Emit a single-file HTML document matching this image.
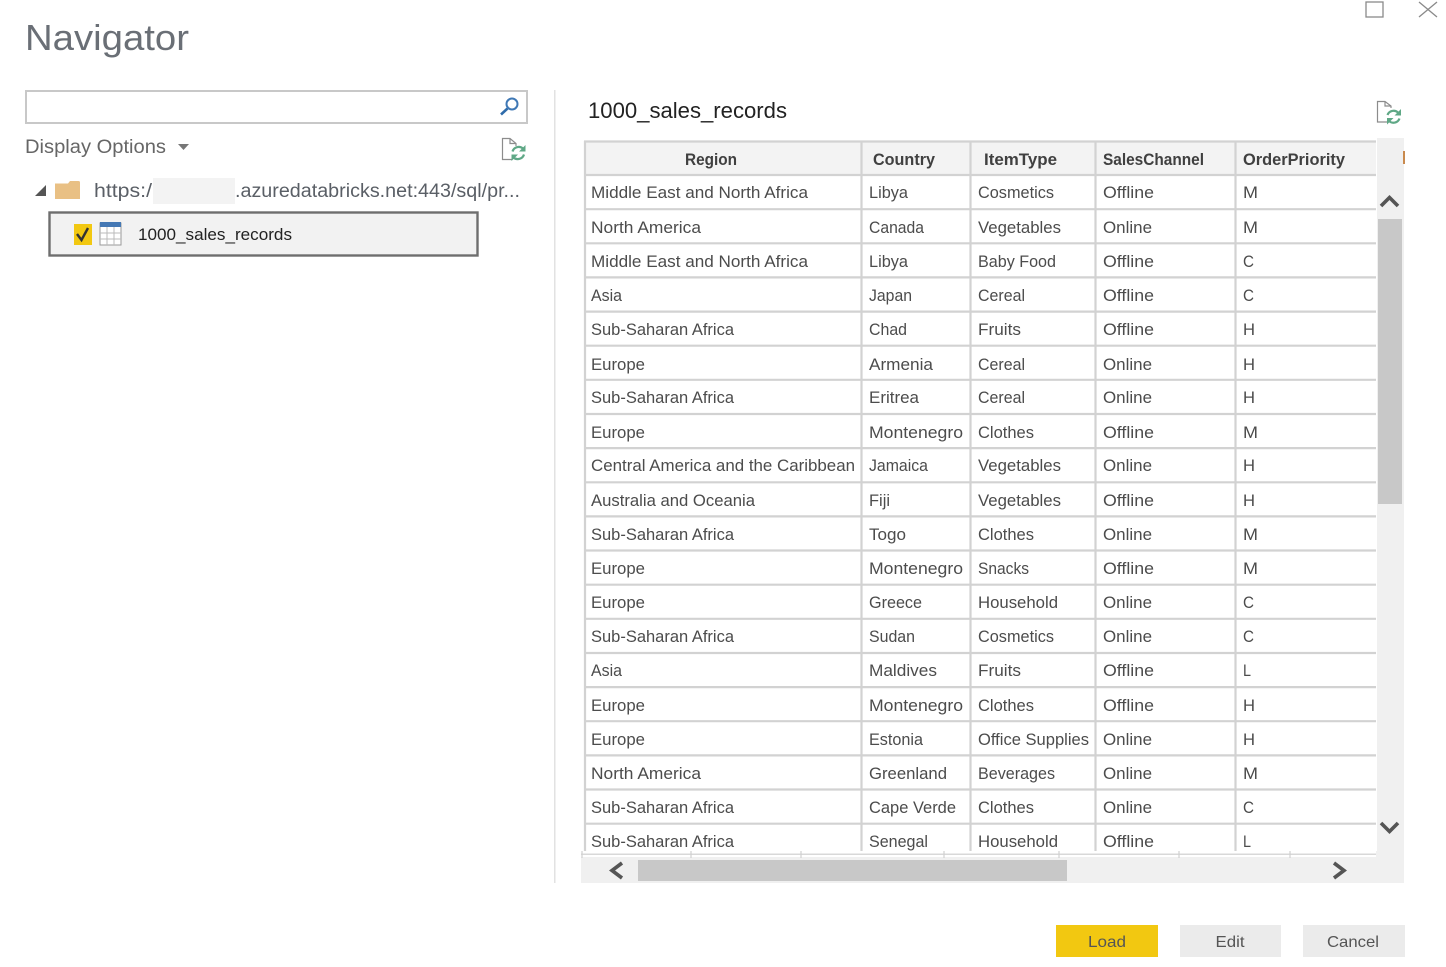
<!DOCTYPE html>
<html><head><meta charset="utf-8"><title>Navigator</title>
<style>
html,body{margin:0;padding:0;background:#fff;width:1446px;height:967px;overflow:hidden}
svg{display:block;font-family:"Liberation Sans",sans-serif;filter:blur(.35px)}
.t text{font-size:17px;fill:#4c4c4c}
.h text{font-size:17px;font-weight:bold;fill:#404040}
</style></head><body>
<svg width="1446" height="967" viewBox="0 0 1446 967" xmlns="http://www.w3.org/2000/svg">
<defs><clipPath id="c"><rect x="580" y="138" width="797" height="713"/></clipPath></defs>
<rect width="1446" height="967" fill="#fff"/>
<!-- window controls -->
<rect x="1366" y="2" width="17" height="15" fill="none" stroke="#8a8a8a" stroke-width="1.3"/>
<path d="M1419 2L1437 17M1437 2L1419 17" stroke="#8a8a8a" stroke-width="1.3" fill="none"/>
<!-- title -->
<text x="25" y="50" font-size="36" fill="#6a6f76" textLength="164" lengthAdjust="spacingAndGlyphs">Navigator</text>
<!-- search -->
<rect x="26" y="91" width="501" height="32" fill="#fff" stroke="#c8c8c8" stroke-width="2"/>
<circle cx="512" cy="104" r="5.500" fill="none" stroke="#3f78b5" stroke-width="2"/>
<path d="M507.500 108.500L501 114.500" stroke="#2f6cab" stroke-width="2.600"/>
<!-- display options -->
<text x="25" y="153" font-size="19" fill="#666" textLength="141" lengthAdjust="spacingAndGlyphs">Display Options</text>
<path d="M178 144H189L183.500 150Z" fill="#777"/>
<!-- refresh icon left -->
<path d="M516 146V143.500L510 138.500H502.500V159.500H512" fill="#fff" stroke="#8c8c8c" stroke-width="1.200"/>
<path d="M510 138.500V143.500H516" fill="none" stroke="#8c8c8c" stroke-width="1.200"/>
<path d="M512.500 151.500A6.500 6.500 0 0 1 523 148.500M524 154.500A6.500 6.500 0 0 1 513.500 157.500" fill="none" stroke="#5fa886" stroke-width="2.200"/>
<path d="M525.500 145V151.500H519Z M511.500 161V154.500H518Z" fill="#5fa886"/>
<!-- tree -->
<path d="M46 185V196H35Z" fill="#555"/>
<path d="M55 183.500H68L70 181H78.500a1.500 1.500 0 0 1 1.500 1.500V199H55Z" fill="#e9c084"/>
<text x="94" y="197" font-size="19" fill="#5a5f66" textLength="58" lengthAdjust="spacingAndGlyphs">https:/</text>
<rect x="153" y="178" width="82" height="26" fill="#f3f3f3"/>
<text x="235" y="197" font-size="19" fill="#5a5f66" textLength="285" lengthAdjust="spacingAndGlyphs">.azuredatabricks.net:443/sql/pr...</text>
<!-- selected -->
<rect x="49.500" y="212.500" width="428" height="43" fill="#f2f2f2" stroke="#6e6e6e" stroke-width="2.400"/>
<rect x="74" y="224" width="18" height="21" fill="#f2c811"/>
<path d="M77 234L81.500 240L88 228" fill="none" stroke="#333" stroke-width="2.400"/>
<rect x="100" y="223" width="21" height="22" fill="#fff" stroke="#999" stroke-width="1"/>
<rect x="100" y="222" width="21" height="5" fill="#4478b4"/>
<path d="M107 227V245M114 227V245M100 233H121M100 239H121" stroke="#bbb" stroke-width="1"/>
<text x="138" y="240" font-size="17" fill="#222" textLength="154" lengthAdjust="spacingAndGlyphs">1000_sales_records</text>
<!-- splitter -->
<rect x="554" y="90" width="1.500" height="793" fill="#e2e2e2"/>
<!-- heading -->
<text x="588" y="118" font-size="22" fill="#222" textLength="199" lengthAdjust="spacingAndGlyphs">1000_sales_records</text>
<!-- refresh icon right -->
<path d="M1391 108V106L1385 101.500H1377.500V122H1387" fill="#fff" stroke="#8c8c8c" stroke-width="1.200"/>
<path d="M1385 101.500V106H1391" fill="none" stroke="#8c8c8c" stroke-width="1.200"/>
<path d="M1387.500 115A6.500 6.500 0 0 1 1398 112.500M1399.500 118.500A6.500 6.500 0 0 1 1389 121" fill="none" stroke="#5fa886" stroke-width="2.200"/>
<path d="M1401 109V115.500H1394.500Z M1387 124.500V118H1393.500Z" fill="#5fa886"/>
<!-- scrollbars -->
<rect x="1377" y="138" width="27" height="745" fill="#f0f0f0"/>
<rect x="581" y="851" width="823" height="32" fill="#f0f0f0"/>
<rect x="1378" y="219" width="24" height="285" fill="#c8c8c8"/>
<rect x="638" y="860" width="429" height="21" fill="#c8c8c8"/>
<path d="M1381 206L1389.500 197.500L1398 206" fill="none" stroke="#555" stroke-width="3.600"/>
<path d="M1381 823L1389.500 831.500L1398 823" fill="none" stroke="#555" stroke-width="3.600"/>
<path d="M622 863L612 870.500L622 878" fill="none" stroke="#555" stroke-width="3.600"/>
<path d="M1334 863L1344 870.500L1334 878" fill="none" stroke="#555" stroke-width="3.600"/>
<rect x="1403" y="151" width="2" height="13" fill="#c98a4e"/>
<!-- table grid -->
<rect x="585" y="141" width="791" height="34" fill="#f3f3f3"/>
<g clip-path="url(#c)">
<g stroke="#d2d2d2" stroke-width="2.200" fill="none">
<path d="M584 141.500H1376M584 175H1376M584 209.200H1376M584 243.300H1376M584 277.400H1376M584 311.600H1376M584 345.700H1376M584 379.800H1376M584 414H1376M584 448.100H1376M584 482.300H1376M584 516.400H1376M584 550.500H1376M584 584.700H1376M584 618.800H1376M584 653H1376M584 687.100H1376M584 721.200H1376M584 755.400H1376M584 789.500H1376M584 823.700H1376"/>
<path d="M585 141V851M861.500 141V851M970.500 141V851M1095.500 141V851M1235.500 141V851"/>
</g>
<g class="h">
<text x="685" y="165" textLength="52" lengthAdjust="spacingAndGlyphs">Region</text>
<text x="873" y="165" textLength="62" lengthAdjust="spacingAndGlyphs">Country</text>
<text x="984" y="165" textLength="73" lengthAdjust="spacingAndGlyphs">ItemType</text>
<text x="1103" y="165" textLength="101" lengthAdjust="spacingAndGlyphs">SalesChannel</text>
<text x="1243" y="165" textLength="102" lengthAdjust="spacingAndGlyphs">OrderPriority</text>
</g>
<g class="t">
<text x="591" y="198" textLength="217" lengthAdjust="spacingAndGlyphs">Middle East and North Africa</text><text x="869" y="198" textLength="39" lengthAdjust="spacingAndGlyphs">Libya</text><text x="978" y="198" textLength="76" lengthAdjust="spacingAndGlyphs">Cosmetics</text><text x="1103" y="198" textLength="51" lengthAdjust="spacingAndGlyphs">Offline</text><text x="1243" y="198" textLength="15" lengthAdjust="spacingAndGlyphs">M</text>
<text x="591" y="233" textLength="110" lengthAdjust="spacingAndGlyphs">North America</text><text x="869" y="233" textLength="55" lengthAdjust="spacingAndGlyphs">Canada</text><text x="978" y="233" textLength="83" lengthAdjust="spacingAndGlyphs">Vegetables</text><text x="1103" y="233" textLength="49" lengthAdjust="spacingAndGlyphs">Online</text><text x="1243" y="233" textLength="15" lengthAdjust="spacingAndGlyphs">M</text>
<text x="591" y="267" textLength="217" lengthAdjust="spacingAndGlyphs">Middle East and North Africa</text><text x="869" y="267" textLength="39" lengthAdjust="spacingAndGlyphs">Libya</text><text x="978" y="267" textLength="78" lengthAdjust="spacingAndGlyphs">Baby Food</text><text x="1103" y="267" textLength="51" lengthAdjust="spacingAndGlyphs">Offline</text><text x="1243" y="267" textLength="11" lengthAdjust="spacingAndGlyphs">C</text>
<text x="591" y="301" textLength="31" lengthAdjust="spacingAndGlyphs">Asia</text><text x="869" y="301" textLength="43" lengthAdjust="spacingAndGlyphs">Japan</text><text x="978" y="301" textLength="47" lengthAdjust="spacingAndGlyphs">Cereal</text><text x="1103" y="301" textLength="51" lengthAdjust="spacingAndGlyphs">Offline</text><text x="1243" y="301" textLength="11" lengthAdjust="spacingAndGlyphs">C</text>
<text x="591" y="335" textLength="143" lengthAdjust="spacingAndGlyphs">Sub-Saharan Africa</text><text x="869" y="335" textLength="38" lengthAdjust="spacingAndGlyphs">Chad</text><text x="978" y="335" textLength="43" lengthAdjust="spacingAndGlyphs">Fruits</text><text x="1103" y="335" textLength="51" lengthAdjust="spacingAndGlyphs">Offline</text><text x="1243" y="335" textLength="12" lengthAdjust="spacingAndGlyphs">H</text>
<text x="591" y="370" textLength="54" lengthAdjust="spacingAndGlyphs">Europe</text><text x="869" y="370" textLength="64" lengthAdjust="spacingAndGlyphs">Armenia</text><text x="978" y="370" textLength="47" lengthAdjust="spacingAndGlyphs">Cereal</text><text x="1103" y="370" textLength="49" lengthAdjust="spacingAndGlyphs">Online</text><text x="1243" y="370" textLength="12" lengthAdjust="spacingAndGlyphs">H</text>
<text x="591" y="403" textLength="143" lengthAdjust="spacingAndGlyphs">Sub-Saharan Africa</text><text x="869" y="403" textLength="50" lengthAdjust="spacingAndGlyphs">Eritrea</text><text x="978" y="403" textLength="47" lengthAdjust="spacingAndGlyphs">Cereal</text><text x="1103" y="403" textLength="49" lengthAdjust="spacingAndGlyphs">Online</text><text x="1243" y="403" textLength="12" lengthAdjust="spacingAndGlyphs">H</text>
<text x="591" y="438" textLength="54" lengthAdjust="spacingAndGlyphs">Europe</text><text x="869" y="438" textLength="94" lengthAdjust="spacingAndGlyphs">Montenegro</text><text x="978" y="438" textLength="56" lengthAdjust="spacingAndGlyphs">Clothes</text><text x="1103" y="438" textLength="51" lengthAdjust="spacingAndGlyphs">Offline</text><text x="1243" y="438" textLength="15" lengthAdjust="spacingAndGlyphs">M</text>
<text x="591" y="471" textLength="264" lengthAdjust="spacingAndGlyphs">Central America and the Caribbean</text><text x="869" y="471" textLength="59" lengthAdjust="spacingAndGlyphs">Jamaica</text><text x="978" y="471" textLength="83" lengthAdjust="spacingAndGlyphs">Vegetables</text><text x="1103" y="471" textLength="49" lengthAdjust="spacingAndGlyphs">Online</text><text x="1243" y="471" textLength="12" lengthAdjust="spacingAndGlyphs">H</text>
<text x="591" y="506" textLength="164" lengthAdjust="spacingAndGlyphs">Australia and Oceania</text><text x="869" y="506" textLength="21" lengthAdjust="spacingAndGlyphs">Fiji</text><text x="978" y="506" textLength="83" lengthAdjust="spacingAndGlyphs">Vegetables</text><text x="1103" y="506" textLength="51" lengthAdjust="spacingAndGlyphs">Offline</text><text x="1243" y="506" textLength="12" lengthAdjust="spacingAndGlyphs">H</text>
<text x="591" y="540" textLength="143" lengthAdjust="spacingAndGlyphs">Sub-Saharan Africa</text><text x="869" y="540" textLength="37" lengthAdjust="spacingAndGlyphs">Togo</text><text x="978" y="540" textLength="56" lengthAdjust="spacingAndGlyphs">Clothes</text><text x="1103" y="540" textLength="49" lengthAdjust="spacingAndGlyphs">Online</text><text x="1243" y="540" textLength="15" lengthAdjust="spacingAndGlyphs">M</text>
<text x="591" y="574" textLength="54" lengthAdjust="spacingAndGlyphs">Europe</text><text x="869" y="574" textLength="94" lengthAdjust="spacingAndGlyphs">Montenegro</text><text x="978" y="574" textLength="51" lengthAdjust="spacingAndGlyphs">Snacks</text><text x="1103" y="574" textLength="51" lengthAdjust="spacingAndGlyphs">Offline</text><text x="1243" y="574" textLength="15" lengthAdjust="spacingAndGlyphs">M</text>
<text x="591" y="608" textLength="54" lengthAdjust="spacingAndGlyphs">Europe</text><text x="869" y="608" textLength="53" lengthAdjust="spacingAndGlyphs">Greece</text><text x="978" y="608" textLength="80" lengthAdjust="spacingAndGlyphs">Household</text><text x="1103" y="608" textLength="49" lengthAdjust="spacingAndGlyphs">Online</text><text x="1243" y="608" textLength="11" lengthAdjust="spacingAndGlyphs">C</text>
<text x="591" y="642" textLength="143" lengthAdjust="spacingAndGlyphs">Sub-Saharan Africa</text><text x="869" y="642" textLength="46" lengthAdjust="spacingAndGlyphs">Sudan</text><text x="978" y="642" textLength="76" lengthAdjust="spacingAndGlyphs">Cosmetics</text><text x="1103" y="642" textLength="49" lengthAdjust="spacingAndGlyphs">Online</text><text x="1243" y="642" textLength="11" lengthAdjust="spacingAndGlyphs">C</text>
<text x="591" y="676" textLength="31" lengthAdjust="spacingAndGlyphs">Asia</text><text x="869" y="676" textLength="68" lengthAdjust="spacingAndGlyphs">Maldives</text><text x="978" y="676" textLength="43" lengthAdjust="spacingAndGlyphs">Fruits</text><text x="1103" y="676" textLength="51" lengthAdjust="spacingAndGlyphs">Offline</text><text x="1243" y="676" textLength="8" lengthAdjust="spacingAndGlyphs">L</text>
<text x="591" y="711" textLength="54" lengthAdjust="spacingAndGlyphs">Europe</text><text x="869" y="711" textLength="94" lengthAdjust="spacingAndGlyphs">Montenegro</text><text x="978" y="711" textLength="56" lengthAdjust="spacingAndGlyphs">Clothes</text><text x="1103" y="711" textLength="51" lengthAdjust="spacingAndGlyphs">Offline</text><text x="1243" y="711" textLength="12" lengthAdjust="spacingAndGlyphs">H</text>
<text x="591" y="745" textLength="54" lengthAdjust="spacingAndGlyphs">Europe</text><text x="869" y="745" textLength="54" lengthAdjust="spacingAndGlyphs">Estonia</text><text x="978" y="745" textLength="111" lengthAdjust="spacingAndGlyphs">Office Supplies</text><text x="1103" y="745" textLength="49" lengthAdjust="spacingAndGlyphs">Online</text><text x="1243" y="745" textLength="12" lengthAdjust="spacingAndGlyphs">H</text>
<text x="591" y="779" textLength="110" lengthAdjust="spacingAndGlyphs">North America</text><text x="869" y="779" textLength="78" lengthAdjust="spacingAndGlyphs">Greenland</text><text x="978" y="779" textLength="77" lengthAdjust="spacingAndGlyphs">Beverages</text><text x="1103" y="779" textLength="49" lengthAdjust="spacingAndGlyphs">Online</text><text x="1243" y="779" textLength="15" lengthAdjust="spacingAndGlyphs">M</text>
<text x="591" y="813" textLength="143" lengthAdjust="spacingAndGlyphs">Sub-Saharan Africa</text><text x="869" y="813" textLength="87" lengthAdjust="spacingAndGlyphs">Cape Verde</text><text x="978" y="813" textLength="56" lengthAdjust="spacingAndGlyphs">Clothes</text><text x="1103" y="813" textLength="49" lengthAdjust="spacingAndGlyphs">Online</text><text x="1243" y="813" textLength="11" lengthAdjust="spacingAndGlyphs">C</text>
<text x="591" y="847" textLength="143" lengthAdjust="spacingAndGlyphs">Sub-Saharan Africa</text><text x="869" y="847" textLength="59" lengthAdjust="spacingAndGlyphs">Senegal</text><text x="978" y="847" textLength="80" lengthAdjust="spacingAndGlyphs">Household</text><text x="1103" y="847" textLength="51" lengthAdjust="spacingAndGlyphs">Offline</text><text x="1243" y="847" textLength="8" lengthAdjust="spacingAndGlyphs">L</text>
</g>
</g>
<!-- clipped area under the table -->
<rect x="581" y="851" width="795" height="6" fill="#fff"/>
<rect x="581" y="853.500" width="795" height="1.500" fill="#d8d8d8"/>
<path d="M582 851V858M691 851V858M801 851V858M944 851V858M1059 851V858M1179 851V858M1290 851V858" stroke="#d0d0d0" stroke-width="1.200"/>
<!-- buttons -->
<rect x="1056" y="925" width="102" height="32" fill="#f2c811"/>
<text x="1107" y="947" font-size="16" fill="#555" text-anchor="middle" textLength="38" lengthAdjust="spacingAndGlyphs">Load</text>
<rect x="1180" y="925" width="101" height="32" fill="#ebebeb"/>
<text x="1230" y="947" font-size="16" fill="#555" text-anchor="middle" textLength="29" lengthAdjust="spacingAndGlyphs">Edit</text>
<rect x="1303" y="925" width="102" height="32" fill="#ebebeb"/>
<text x="1353" y="947" font-size="16" fill="#555" text-anchor="middle" textLength="52" lengthAdjust="spacingAndGlyphs">Cancel</text>
</svg>
</body></html>
